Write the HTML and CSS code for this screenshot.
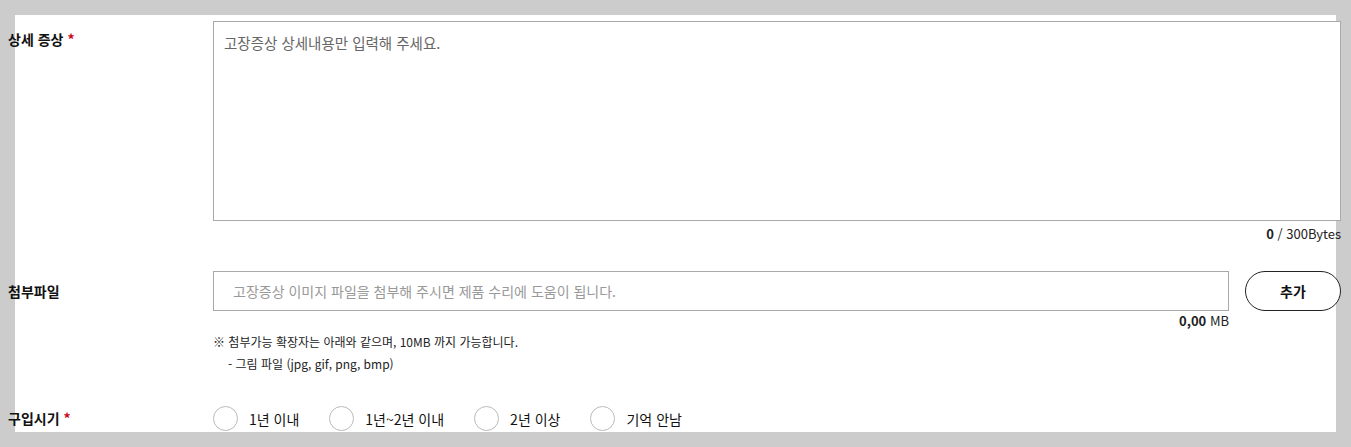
FILE: index.html
```html
<!DOCTYPE html>
<html lang="ko">
<head>
<meta charset="utf-8">
<link rel="stylesheet" href="styles.css">
</head>
<body>
<div class="panel">
  <div class="form">
    <div class="row row-symptom">
      <div class="label">상세 증상 <span class="req">*</span></div>
      <div class="field">
        <textarea class="textarea" placeholder="고장증상 상세내용만 입력해 주세요."></textarea>
        <div class="counter"><b>0</b> / 300Bytes</div>
      </div>
    </div>
    <div class="row row-file">
      <div class="label">첨부파일</div>
      <div class="field">
        <div class="file-line">
          <div class="file-col">
            <input class="file-input" type="text" placeholder="고장증상 이미지 파일을 첨부해 주시면 제품 수리에 도움이 됩니다." readonly>
            <div class="size"><b>0,00</b> MB</div>
          </div>
          <button class="add-btn" type="button">추가</button>
        </div>
        <p class="note">※ 첨부가능 확장자는 아래와 같으며, 10MB 까지 가능합니다.</p>
        <p class="note sub">- 그림 파일 (jpg, gif, png, bmp)</p>
      </div>
    </div>
    <div class="row row-date">
      <div class="label">구입시기 <span class="req">*</span></div>
      <div class="field radios">
        <label class="radio"><input type="radio" name="buy"><span>1년 이내</span></label>
        <label class="radio"><input type="radio" name="buy"><span>1년~2년 이내</span></label>
        <label class="radio"><input type="radio" name="buy"><span>2년 이상</span></label>
        <label class="radio"><input type="radio" name="buy"><span>기억 안남</span></label>
      </div>
    </div>
  </div>
</div>
</body>
</html>
```
FILE: styles.css
```css
html, body {
  margin: 0;
  padding: 0;
  background: #cccccc;
  overflow: hidden;
}
body {
  font-family: "Noto Sans CJK KR", "Noto Sans", sans-serif;
  color: #111;
  height: 447px;
}
.panel {
  background: #fff;
  margin: 15px 15px 0 15px;
  height: 417px;
}
.form {
  margin: 0 -5px 0 -7px;
  padding-top: 6px;
}
.row {
  display: grid;
  grid-template-columns: 205px 1fr;
}
.label {
  font-size: 14px;
  font-weight: 700;
  line-height: 20px;
  padding-top: 8px;
}
.req {
  color: #d0021b;
}
.field {
  min-width: 0;
}
.textarea {
  display: block;
  box-sizing: border-box;
  width: 100%;
  height: 200px;
  border: 1px solid #a9a9a9;
  padding: 11px 10px;
  margin: 0;
  font-family: inherit;
  font-size: 14.5px;
  line-height: 20px;
  resize: none;
  outline: none;
}
.textarea::placeholder {
  color: #666;
}
.counter {
  text-align: right;
  font-size: 13px;
  line-height: 16px;
  margin-top: 5px;
  color: #222;
}
.row-file {
  margin-top: 29px;
}
.row-file .label {
  padding-top: 10px;
}
.file-line {
  display: flex;
  gap: 16px;
  align-items: flex-start;
}
.file-col {
  flex: 1;
}
.file-input {
  display: block;
  box-sizing: border-box;
  width: 100%;
  height: 40px;
  border: 1px solid #a9a9a9;
  padding: 0 19px;
  margin: 0;
  font-family: inherit;
  font-size: 14px;
  outline: none;
}
.file-input::placeholder {
  color: #999;
}
.size {
  text-align: right;
  font-size: 13px;
  line-height: 16px;
  margin-top: 2px;
  color: #222;
}
.add-btn {
  width: 96px;
  height: 40px;
  border: 1px solid #222;
  border-radius: 20px;
  background: #fff;
  font-family: inherit;
  font-size: 14px;
  font-weight: 700;
  color: #111;
  padding: 0;
}
.note {
  margin: 0;
  font-size: 12px;
  line-height: 22px;
  color: #222;
}
.note:first-of-type {
  margin-top: 2px;
}
.note.sub {
  padding-left: 15px;
}
.row-date {
  margin-top: 31px;
}
.row-date .label {
  padding-top: 2px;
}
.radios {
  display: flex;
}
.radio {
  display: flex;
  align-items: center;
  font-size: 14px;
  color: #111;
  margin-right: 30px;
}
.radio input {
  appearance: none;
  -webkit-appearance: none;
  width: 25px;
  height: 25px;
  border: 1px solid #bbb;
  border-radius: 50%;
  margin: 0 11px 0 0;
  box-sizing: border-box;
  background: #fff;
}
```
